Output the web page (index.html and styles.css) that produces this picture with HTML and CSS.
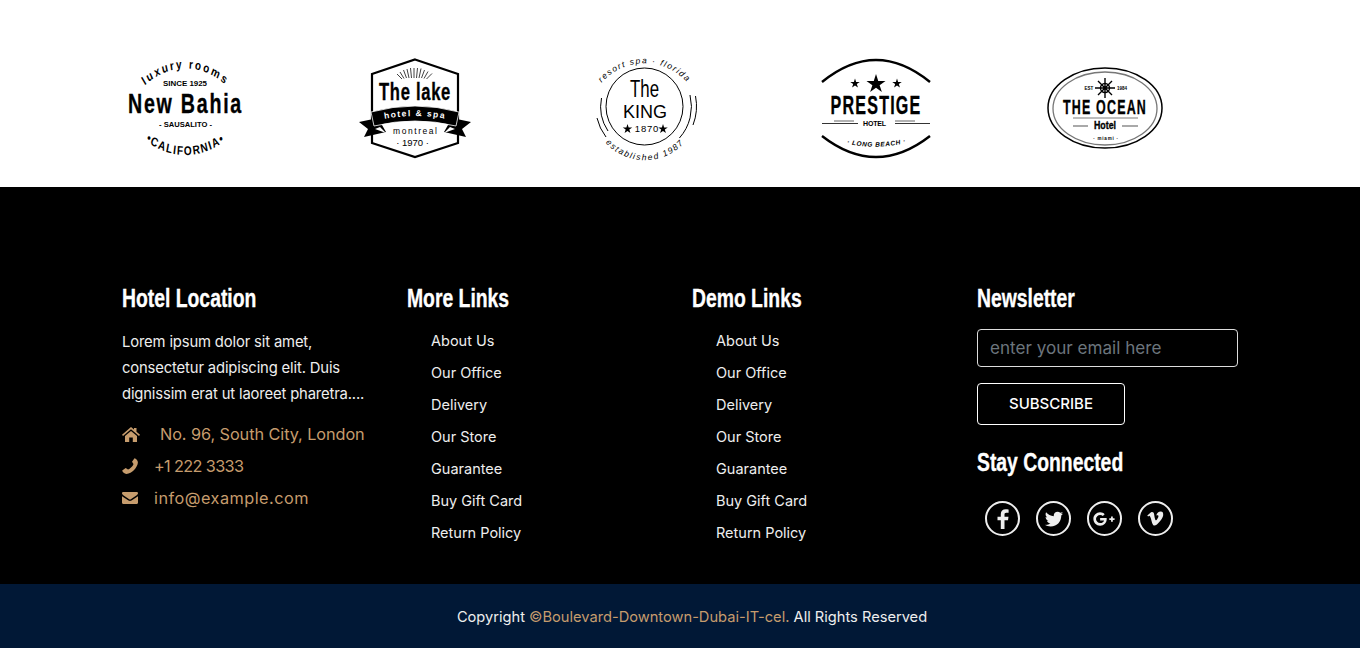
FILE: index.html
```html
<!DOCTYPE html>
<html lang="en">
<head>
<meta charset="utf-8">
<title>Footer</title>
<link rel="stylesheet" href="styles.css">
</head>
<body>
<svg class="defs" width="0" height="0" aria-hidden="true">
  <defs>
    <polygon id="star" points="0,-1 .225,-.309 .951,-.309 .363,.118 .588,.809 0,.382 -.588,.809 -.363,.118 -.951,-.309 -.225,-.309"/>
  </defs>
</svg>
<section class="brands">
  <!-- New Bahia -->
  <div class="brand">
    <svg class="logo" viewBox="0 0 130 110" width="130" height="110">
      <defs>
        <path id="nb-top" d="M-50 32 A75 65 0 0 1 50 32"/>
        <path id="nb-bot" d="M-50 87 A76 61 0 0 0 50 87"/>
      </defs>
      <g transform="translate(65.500 0) scale(.8 1)">
        <text class="lg-sans nb-arc" letter-spacing="2.500"><textPath href="#nb-top" startOffset="50%" text-anchor="middle">luxury rooms</textPath></text>
        <text class="lg-sans nb-arc2" letter-spacing="1.600"><textPath href="#nb-bot" startOffset="50%" text-anchor="middle">•CALIFORNIA•</textPath></text>
      </g>
      <text x="65" y="33" class="lg-sans nb-since" text-anchor="middle" textLength="44" lengthAdjust="spacingAndGlyphs">SINCE 1925</text>
      <text x="65.500" y="60" class="lg-cond nb-main" text-anchor="middle" textLength="115" lengthAdjust="spacingAndGlyphs" letter-spacing="2.500">New Bahia</text>
      <text x="65.500" y="74" class="lg-sans nb-since" text-anchor="middle" textLength="53" lengthAdjust="spacingAndGlyphs">- SAUSALITO -</text>
    </svg>
  </div>
  <!-- The lake -->
  <div class="brand">
    <svg class="logo" viewBox="0 0 130 110" width="130" height="110">
      <defs><path id="lk-band" d="M33 66 Q65 60 97 66"/></defs>
      <path d="M65 6.500 L108 21 V90 L65 104 L22 90 V21 Z" fill="#fff" stroke="#000" stroke-width="2.200"/>
      <path class="rays" d="M47 21 L52 26M50 19 L54 25.500M53.500 17 L56.500 25M57 16 L59 25M60.500 15 L61.500 25M64 15 L64 25M67.500 15 L66.500 25M71 15.500 L69 25M74.500 17 L71.500 25M78 18.500 L74 25.500M82 20.500 L76.500 26"/>
      <text x="65" y="47" class="lg-cond lk-main" text-anchor="middle" textLength="72" lengthAdjust="spacingAndGlyphs" letter-spacing="1">The lake</text>
      <path d="M9 69 L28 65 L36 79 L14 84 L18 76 Z M121 69 L102 65 L94 79 L116 84 L112 76 Z" fill="#000"/>
      <path d="M36 80 L30 74 L25 76 Z M94 80 L100 74 L105 76 Z" fill="#fff"/>
      <path d="M21 59 Q65 47 109 59 L106 73 Q65 63 24 73 Z" fill="#000" stroke="#fff" stroke-width=".8"/>
      <text class="lg-sans lk-band" letter-spacing="1.400"><textPath href="#lk-band" startOffset="50%" text-anchor="middle">hotel &amp; spa</textPath></text>
      <text x="65" y="81" class="lg-sans lk-mont" text-anchor="middle" textLength="44" lengthAdjust="spacing">montreal</text>
      <text x="62.500" y="93" class="lg-sans lk-year" text-anchor="middle">· 1970 ·</text>
    </svg>
  </div>
  <!-- The King -->
  <div class="brand">
    <svg class="logo" viewBox="0 0 130 110" width="130" height="110">
      <defs>
        <path id="k-top" d="M19 33 A57 57 0 0 1 110 33"/>
        <path id="k-bot" d="M25 89 A53 53 0 0 0 105 89"/>
      </defs>
      <circle cx="64.500" cy="53.500" r="38.500" class="k-line"/>
      <path class="k-line" d="M21.500 45 A44 44 0 0 0 28 78M17 65 A49 49 0 0 0 26 84M110 42 A47 47 0 0 1 99.400 85M115.500 43 A52 52 0 0 1 113 72"/>
      <text class="lg-sans k-arc" letter-spacing="1.400"><textPath href="#k-top" startOffset="50%" text-anchor="middle">resort spa · florida</textPath></text>
      <text class="lg-sans k-arc" letter-spacing="1.500"><textPath href="#k-bot" startOffset="50%" text-anchor="middle">established 1987</textPath></text>
      <text x="64.500" y="44" class="lg-sans k-the" text-anchor="middle" textLength="29" lengthAdjust="spacingAndGlyphs">The</text>
      <text x="65" y="65" class="lg-sans k-king" text-anchor="middle" textLength="44" lengthAdjust="spacingAndGlyphs">KING</text>
      <text x="67" y="79" class="lg-sans k-year" text-anchor="middle" letter-spacing=".8">1870</text>
      <use href="#star" transform="translate(47.500 76) scale(5)"/>
      <use href="#star" transform="translate(83 76) scale(5)"/>
    </svg>
  </div>
  <!-- Prestige -->
  <div class="brand">
    <svg class="logo" viewBox="0 0 130 110" width="130" height="110">
      <defs><path id="p-long" d="M38 91 Q66 97 95 90"/></defs>
      <path class="p-arc" d="M12 29 Q66 -15 120 29M12 83 Q66 125 120 83"/>
      <use href="#star" transform="translate(66 31) scale(10)"/>
      <use href="#star" transform="translate(45 30.500) scale(5)"/>
      <use href="#star" transform="translate(87 30.500) scale(5)"/>
      <text x="66" y="61" class="lg-cond p-main" text-anchor="middle" textLength="91" lengthAdjust="spacingAndGlyphs" letter-spacing="2">PRESTIGE</text>
      <text x="64.500" y="72.500" class="lg-sans p-hotel" text-anchor="middle" textLength="23" lengthAdjust="spacing">HOTEL</text>
      <path d="M12 70.500 H48 M85 70.500 H120" stroke="#000" stroke-width=".8"/>
      <path d="M24 68 H44 M85 68 H105" stroke="#666" stroke-width="1.200"/>
      <text class="lg-sans p-long" letter-spacing=".6"><textPath href="#p-long" startOffset="50%" text-anchor="middle">· LONG BEACH ·</textPath></text>
    </svg>
  </div>
  <!-- The Ocean -->
  <div class="brand">
    <svg class="logo" viewBox="0 0 130 110" width="130" height="110">
      <ellipse cx="65" cy="55" rx="57" ry="40" class="o-outer"/>
      <ellipse cx="65" cy="55.500" rx="52" ry="36.500" class="o-inner"/>
      <g class="o-wheel">
        <circle cx="65" cy="35" r="4.500"/>
        <path d="M55 35 H75 M65 25 V45 M58 28 L72 42 M72 28 L58 42"/>
      </g>
      <text x="49" y="37" class="lg-sans o-tiny" text-anchor="middle">EST</text>
      <text x="82" y="37" class="lg-sans o-tiny" text-anchor="middle">1984</text>
      <text x="65" y="61" class="lg-cond o-main" text-anchor="middle" textLength="84" lengthAdjust="spacingAndGlyphs" letter-spacing="2">THE OCEAN</text>
      <path d="M33 65 H98" stroke="#444" stroke-width=".7"/>
      <path d="M33 73 H48 M82 73 H98" stroke="#555" stroke-width="1.100"/>
      <text x="65" y="76" class="lg-cond o-hotel" text-anchor="middle" textLength="22" lengthAdjust="spacingAndGlyphs">Hotel</text>
      <text x="66" y="87" class="lg-sans o-tiny" text-anchor="middle" letter-spacing=".8">· miami ·</text>
    </svg>
  </div>
</section>

<footer class="footer">
  <div class="cols">
    <div class="col">
      <h3 class="col-title">Hotel Location</h3>
      <p class="about">Lorem ipsum dolor sit amet, consectetur adipiscing elit. Duis dignissim erat ut laoreet pharetra....</p>
      <ul class="contact">
        <li><svg class="ci ci-home" viewBox="0 0 18 15"><path d="M9 0 L12 2.600 V1 H14.500 V4.700 L18 7.700 L17 8.900 L9 2.200 L1 8.900 L0 7.700 Z M3 9 L9 4 L15 9 V15 H10.800 V10.500 H7.200 V15 H3 Z"/></svg><span class="c-addr">No. 96, South City, London</span></li>
        <li><svg class="ci ci-phone" viewBox="0 0 16 16"><path d="M12.500 0.200 L10 3.800 L11.500 6 C11 8 8 11 6 11.500 L3.700 10 L0.200 12.500 C0.500 14 2.500 16 4.500 15.900 C10 15.500 15.500 9.500 15.900 4.500 C16 2.500 14 0.500 12.500 0.200 Z"/></svg><span class="c-tel">+1 222 3333</span></li>
        <li><svg class="ci ci-mail" viewBox="0 0 16 12"><path d="M1.200 0 H14.800 C15.600 0 16 .6 16 1.300 C16 2.100 15.400 2.800 14.700 3.300 L8.800 7.300 C8.300 7.600 7.700 7.600 7.200 7.300 L1.300 3.300 C.6 2.800 0 2.100 0 1.300 C0 .6 .4 0 1.200 0 Z M0 4.200 L6.500 8.600 C7.400 9.200 8.600 9.200 9.500 8.600 L16 4.200 V10.800 C16 11.500 15.500 12 14.800 12 H1.200 C.5 12 0 11.500 0 10.800 Z"/></svg><span class="c-mail">info@example.com</span></li>
      </ul>
    </div>
    <div class="col">
      <h3 class="col-title">More Links</h3>
      <ul class="links">
        <li>About Us</li><li>Our Office</li><li>Delivery</li><li>Our Store</li><li>Guarantee</li><li>Buy Gift Card</li><li>Return Policy</li>
      </ul>
    </div>
    <div class="col">
      <h3 class="col-title">Demo Links</h3>
      <ul class="links">
        <li>About Us</li><li>Our Office</li><li>Delivery</li><li>Our Store</li><li>Guarantee</li><li>Buy Gift Card</li><li>Return Policy</li>
      </ul>
    </div>
    <div class="col">
      <h3 class="col-title">Newsletter</h3>
      <form class="news">
        <input class="email" type="text" placeholder="enter your email here">
        <button class="sub" type="button">SUBSCRIBE</button>
      </form>
      <h3 class="col-title stay">Stay Connected</h3>
      <div class="socials">
        <span class="soc"><svg class="soc-f" viewBox="0 0 24 24"><path d="M13.500 22 V13.300 H17 L17.500 9.800 H13.500 V7.500 C13.500 6.500 13.900 5.800 15.300 5.800 H17.600 V2.500 C17 2.400 15.800 2.300 14.600 2.300 C11.800 2.300 9.800 4 9.800 7.100 V9.800 H6.500 V13.300 H9.800 V22 Z"/></svg></span>
        <span class="soc"><svg class="soc-t" viewBox="0 0 24 24"><path d="M23 5.300 C22.200 5.700 21.300 5.900 20.400 6 C21.300 5.400 22 4.600 22.400 3.500 C21.500 4 20.600 4.400 19.500 4.600 C18.700 3.700 17.500 3.200 16.200 3.200 C13.700 3.200 11.700 5.200 11.700 7.700 C11.700 8.100 11.700 8.400 11.800 8.700 C8 8.500 4.700 6.700 2.500 4 C2.100 4.700 1.900 5.400 1.900 6.300 C1.900 7.900 2.700 9.200 3.900 10 C3.200 10 2.500 9.800 1.900 9.500 V9.500 C1.900 11.700 3.500 13.500 5.500 13.900 C5.100 14 4.700 14.100 4.300 14.100 C4 14.100 3.700 14 3.500 14 C4 15.800 5.700 17.100 7.700 17.200 C6.100 18.400 4.200 19.100 2.100 19.100 C1.700 19.100 1.400 19.100 1 19 C3 20.300 5.400 21 7.900 21 C16.200 21 20.700 14.200 20.700 8.300 V7.700 C21.600 7 22.400 6.200 23 5.300 Z"/></svg></span>
        <span class="soc"><svg class="soc-g" viewBox="0 0 26 16"><path d="M8 6.800 V9.600 H12.500 C12.200 11.300 10.600 12.600 8 12.600 C5.500 12.600 3.300 10.500 3.300 8 C3.300 5.400 5.500 3.400 8 3.400 C9.200 3.400 10.300 3.800 11.100 4.600 L13.200 2.500 C11.900 1.200 10.100 .4 8 .4 C3.700 .4 .3 3.800 .3 8 C.3 12.200 3.700 15.600 8 15.600 C12.400 15.600 15.500 12.500 15.500 8 C15.500 7.600 15.500 7.200 15.400 6.800 Z M20.500 5 V7 H18.500 V9 H20.500 V11 H22.500 V9 H24.500 V7 H22.500 V5 Z"/></svg></span>
        <span class="soc"><svg class="soc-v" viewBox="0 0 24 24"><path d="M22.900 6.900 C22.800 9.100 21.300 12.100 18.300 15.900 C15.200 19.900 12.600 21.900 10.500 21.900 C9.200 21.900 8.100 20.700 7.200 18.300 L5.400 11.700 C4.700 9.300 4 8.100 3.300 8.100 C3.100 8.100 2.500 8.500 1.500 9.200 L.4 7.800 C1.500 6.800 2.600 5.900 3.700 4.900 C5.100 3.600 6.200 3 7 2.900 C8.700 2.800 9.700 3.900 10.100 6.300 C10.500 9 10.800 10.600 11 11.300 C11.500 13.500 12 14.600 12.600 14.600 C13.100 14.600 13.800 13.900 14.700 12.400 C15.600 11 16.100 9.900 16.100 9.100 C16.300 7.900 15.800 7.300 14.700 7.300 C14.200 7.300 13.700 7.400 13.100 7.600 C14.200 3.900 16.400 2.100 19.600 2.200 C22 2.300 23 3.800 22.900 6.900 Z"/></svg></span>
      </div>
    </div>
  </div>
</footer>

<div class="copy">
  <p>Copyright <span class="gold">©Boulevard-Downtown-Dubai-IT-cel.</span> All Rights Reserved</p>
</div>
</body>
</html>
```

FILE: styles.css
```css
* { box-sizing: border-box; }
html, body { margin: 0; padding: 0; }
body { font-family: "Inter", "Open Sans", sans-serif; background: #fff; color: #fff; }
ul { list-style: none; margin: 0; padding: 0; }
.defs { display: block; height: 0; }

.brands { height: 187px; background: #fff; display: flex; padding: 53px 0 0 70px; }
.brand { width: 230px; display: flex; justify-content: center; }
.logo { display: block; overflow: visible; }
.logo text { fill: #000; }
.lg-cond { font-family: "Liberation Sans", sans-serif; font-weight: 700; stroke: #000; stroke-width: .35px; }
.lg-sans { font-family: "Liberation Sans", sans-serif; }
.nb-arc { font-size: 12.500px; font-weight: 700; }
.nb-arc2 { font-size: 12.500px; font-weight: 700; }
.nb-since { font-size: 7px; font-weight: 700; }
.nb-main { font-size: 28px; }
.lk-main { font-size: 23.500px; }
.rays { stroke: #111; stroke-width: .8; fill: none; }
.logo .lk-band { fill: #fff; font-size: 8.500px; font-weight: 700; }
.lk-mont { font-size: 8.500px; }
.lk-year { font-size: 9.500px; }
.k-line { fill: none; stroke: #000; stroke-width: 1; }
.k-arc { font-size: 8.500px; font-style: italic; }
.k-the { font-size: 23.500px; }
.k-king { font-size: 18px; }
.k-year { font-size: 9.500px; }
.p-arc { fill: none; stroke: #000; stroke-width: 2.400; }
.p-main { font-size: 26.500px; }
.p-hotel { font-size: 7px; font-weight: 700; }
.p-long { font-size: 6.500px; font-weight: 700; font-style: italic; }
.o-outer { fill: none; stroke: #000; stroke-width: 1.500; }
.o-inner { fill: none; stroke: #777; stroke-width: 1.300; }
.o-wheel { fill: none; stroke: #000; stroke-width: 1.400; }
.o-main { font-size: 21px; }
.o-hotel { font-size: 11px; }
.o-tiny { font-size: 4.500px; font-weight: 700; }

.footer { height: 397px; background: #000; padding: 95px 0 0 122px; }
.cols { display: flex; }
.col { width: 285px; flex: none; padding-right: 30px; }
.col-title { margin: 0; font-family: "Liberation Sans", sans-serif; font-weight: 700; font-size: 26.500px; line-height: 32px; color: #fff; white-space: nowrap; transform: scaleX(.73); transform-origin: left center; -webkit-text-stroke: .35px #fff; }

.about { margin: 15px 0 0; font-size: 14.800px; line-height: 26px; color: #eee; width: 256px; letter-spacing: -.01em; }
.contact { margin-top: 11px; color: #c69c6d; font-size: 16.300px; }
.contact li { display: flex; align-items: center; height: 32px; }
.c-addr { letter-spacing: -.08px; }
.c-tel { letter-spacing: -.65px; }
.c-mail { letter-spacing: .47px; }
.ci { fill: #c69c6d; flex: none; display: block; }
.ci-home { width: 18px; height: 15px; margin-right: 20px; }
.ci-phone { width: 16px; height: 16px; margin-right: 16px; }
.ci-mail { width: 16px; height: 12px; margin-right: 16px; }

.links { margin-top: 11px; padding-left: 24px; }
.links li { height: 32px; line-height: 32px; font-size: 14.500px; color: #eee; }

.news { display: block; margin-top: 15px; }
.email { display: block; width: 261px; height: 38px; background: #000; border: 1px solid #ddd; border-radius: 4px; padding: 0 12px 2px; font: 17.100px "Inter", sans-serif; color: #fff; outline: 0; }
.email::placeholder { color: #6c757d; opacity: 1; }
.sub { display: block; width: 148px; height: 42px; margin-top: 16px; background: #000; border: 1px solid #fff; border-radius: 4px; color: #fff; font: 500 15px "Inter", sans-serif; padding: 0 0 2px; }
.col-title.stay { margin: 21px 0 0; }
.socials { display: flex; gap: 16px; margin: 23px 0 0 8px; }
.soc { width: 35px; height: 35px; border: 2px solid #eee; border-radius: 50%; display: flex; align-items: center; justify-content: center; }
.soc svg { fill: #eee; display: block; }
.soc-f { width: 24px; height: 24px; }
.soc-t { width: 20px; height: 20px; }
.soc-g { width: 23px; height: 14px; }
.soc-v { width: 17px; height: 17px; }

.copy { height: 64px; background: #011836; padding: 2px 0 0 24px; display: flex; align-items: center; justify-content: center; }
.copy p { margin: 0; font-size: 14.650px; color: #eee; }
.gold { color: #c69c6d; }
```
